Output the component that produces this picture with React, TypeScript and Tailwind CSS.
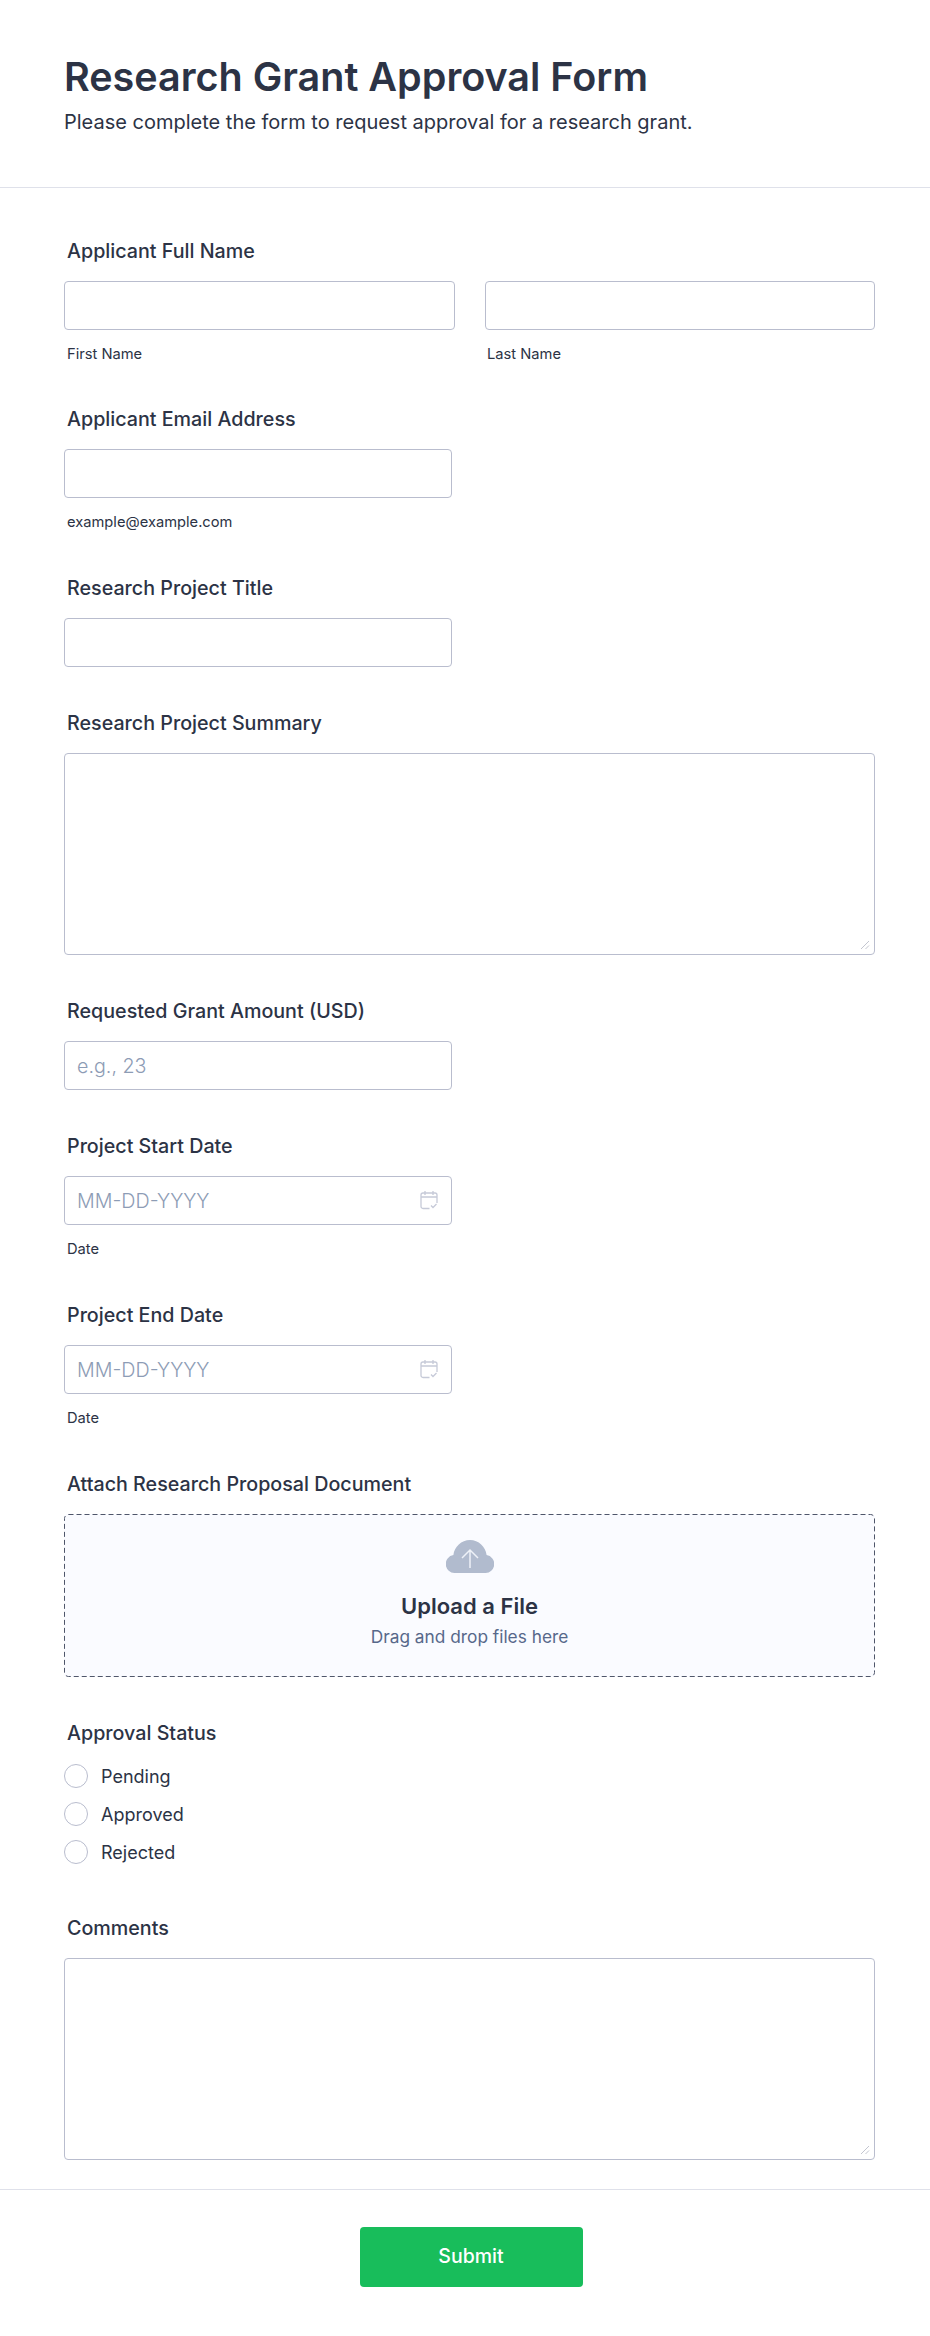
import type { ReactNode } from "react";

const inputClass =
  "block h-[49px] rounded border border-[#b9bdce] bg-white px-3 text-[19.700px] font-light text-[#2c3345] outline-none placeholder:text-[#8d9cb5]";

function Field({ label, children }: { label: string; children: ReactNode }) {
  return (
    <div className="pb-[44px]">
      <label className="mb-[18px] block pl-[3px] text-[19.700px] leading-6 font-medium text-[#2c3345]">{label}</label>
      {children}
    </div>
  );
}

function Sublabel({ children }: { children: ReactNode }) {
  return <p className="mt-[14px] h-5 pl-[3px] text-[14.700px] leading-5 text-[#2c3345]">{children}</p>;
}

function CalendarIcon() {
  return (
    <svg viewBox="0 0 18 20" className="absolute top-[14px] right-[14px] h-5 w-[18px] text-[#c6cad8]" fill="none" stroke="currentColor" strokeWidth="1.300">
      <path d="M9.500 18.500H3a2 2 0 0 1-2-2V5a2 2 0 0 1 2-2h12a2 2 0 0 1 2 2v8" />
      <path d="M1 7h16M5 1v4M13 1v4" />
      <path d="m11 15.500 2 2 3.500-3.500" />
    </svg>
  );
}

function TextArea() {
  return (
    <div className="relative">
      <textarea className="block h-[202px] w-full resize-none rounded border border-[#b9bdce] bg-white px-3 py-2 outline-none" />
      <svg viewBox="0 0 10 10" className="absolute right-[5px] bottom-[5px] h-2.5 w-2.5" fill="none" stroke="#c3c6d0" strokeWidth="1">
        <path d="M1 9l8-8M5.500 9L9 5.500" />
      </svg>
    </div>
  );
}

function DateField({ label }: { label: string }) {
  return (
    <Field label={label}>
      <div className="relative w-[388px]">
        <input className={`${inputClass} w-full`} placeholder="MM-DD-YYYY" />
        <CalendarIcon />
      </div>
      <Sublabel>Date</Sublabel>
    </Field>
  );
}

function Radio({ label }: { label: string }) {
  return (
    <label className="flex h-[38px] items-center gap-[12px] text-[18px] text-[#2c3345]">
      <input type="radio" name="status" className="h-6 w-6 appearance-none rounded-full border border-[#b9bdce] bg-white" />
      <span className="pl-px">{label}</span>
    </label>
  );
}

export default function App() {
  return (
    <main className="min-h-screen bg-white font-['Inter',sans-serif] text-[#2c3345]">
      <header className="border-b border-[#dfe1ea] px-16 pt-[50px] pb-[53px]">
        <h1 className="text-[39.500px] leading-[54px] font-semibold">Research Grant Approval Form</h1>
        <p className="mt-[6px] text-[20px] leading-6">Please complete the form to request approval for a research grant.</p>
      </header>

      <form className="pt-[51px]">
        <div className="pr-[55px] pl-16">
          <div className="-mb-px">
            <Field label="Applicant Full Name">
              <div className="flex gap-[30px]">
                <div className="w-[391px]">
                  <input className={`${inputClass} w-full`} />
                  <Sublabel>First Name</Sublabel>
                </div>
                <div className="w-[390px]">
                  <input className={`${inputClass} w-full`} />
                  <div className="-ml-px">
                    <Sublabel>Last Name</Sublabel>
                  </div>
                </div>
              </div>
            </Field>
          </div>

          <Field label="Applicant Email Address">
            <input className={`${inputClass} w-[388px]`} />
            <Sublabel>example@example.com</Sublabel>
          </Field>

          <Field label="Research Project Title">
            <input className={`${inputClass} w-[388px]`} />
          </Field>

          <Field label="Research Project Summary">
            <TextArea />
          </Field>

          <Field label="Requested Grant Amount (USD)">
            <input className={`${inputClass} w-[388px]`} placeholder="e.g., 23" />
          </Field>

          <DateField label="Project Start Date" />
          <DateField label="Project End Date" />

          <Field label="Attach Research Proposal Document">
            <div className="relative flex h-[163px] flex-col items-center rounded bg-[#fafbff] pt-[26px]">
              <svg className="absolute inset-0 h-full w-full" fill="none">
                <rect x="0.500" y="0.500" width="810" height="162" rx="4" stroke="#4f566a" strokeDasharray="5 3" />
              </svg>
              <svg viewBox="0 0 48 33" className="h-[33px] w-[48px]">
                <path
                  d="M9 33a9 9 0 0 1-1.600-17.900C8.300 6.700 15.400 0 24 0s15.700 6.700 16.600 15.100A9 9 0 0 1 39 33Z"
                  fill="#b1bbce"
                />
                <path d="M24 28V10M16 18l8-8 8 8" fill="none" stroke="#eef1f7" strokeWidth="1.500" />
              </svg>
              <p className="mt-[19px] text-[22px] leading-7 font-semibold">Upload a File</p>
              <p className="mt-[5px] text-[17.300px] leading-6 text-[#57688a]">Drag and drop files here</p>
            </div>
          </Field>

          <div className="pb-[45px]">
            <p className="mb-[12px] pl-[3px] text-[19.700px] leading-6 font-medium">Approval Status</p>
            <Radio label="Pending" />
            <Radio label="Approved" />
            <Radio label="Rejected" />
          </div>

          <div className="pb-[29px]">
            <label className="mb-[18px] block pl-[3px] text-[19.700px] leading-6 font-medium">Comments</label>
            <TextArea />
          </div>
        </div>

        <div className="flex justify-center border-t border-[#dfe1ea] pt-[37px] pl-3">
          <button type="button" className="h-[60px] w-[223px] rounded bg-[#18bd5b] text-[19.500px] font-medium text-white">
            Submit
          </button>
        </div>
      </form>
    </main>
  );
}
